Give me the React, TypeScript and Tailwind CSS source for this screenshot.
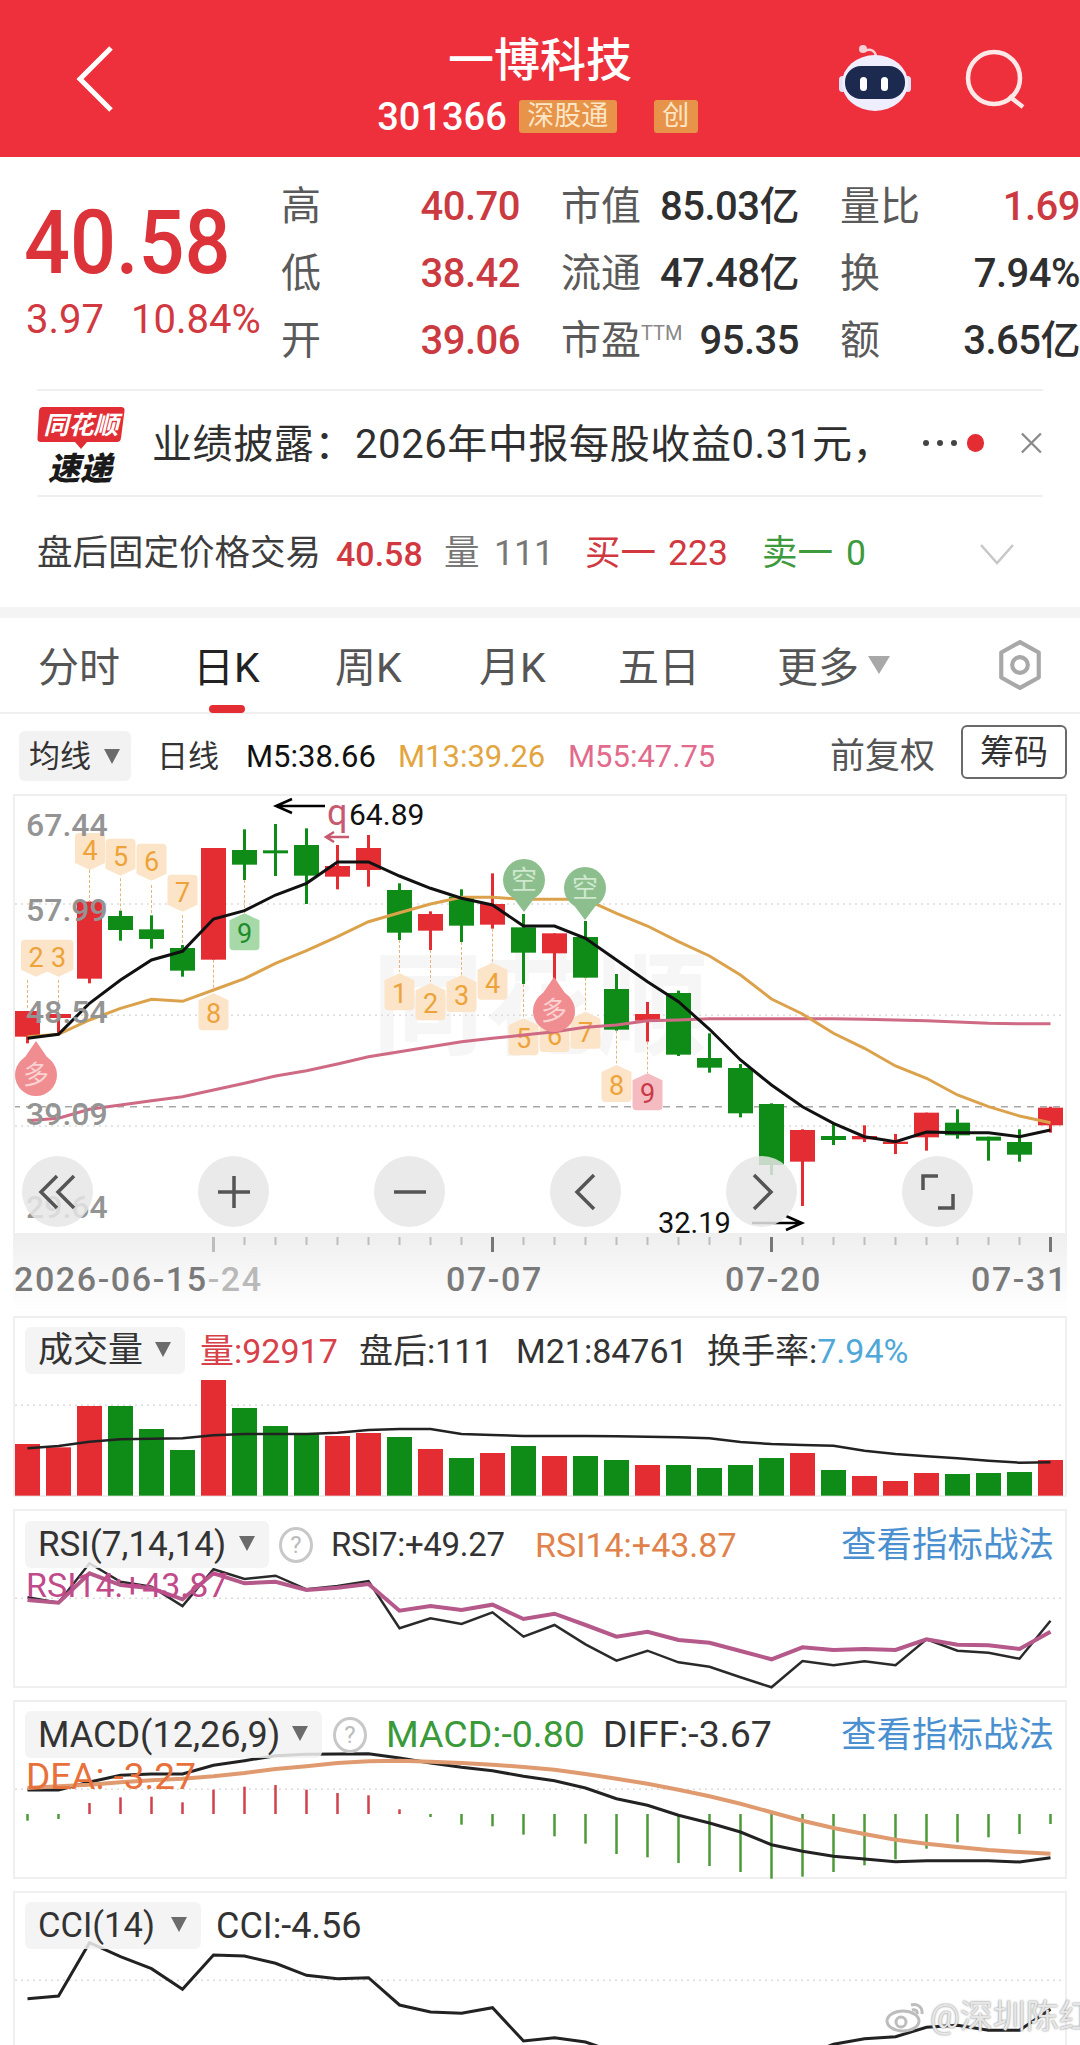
import type { ReactNode } from 'react'

const RED = '#e42c33'
const GREEN = '#0f8c18'
const GRID = '#dcdcdc'

// x of the nth candle; every chart on the page shares it
const cx = (i: number) => 27.5 + 31 * i
const pts = (vals: number[], off: number) =>
  vals.map((v, i) => `${cx(i)},${(v / 3 + off).toFixed(1)}`).join(' ')

const isRed = [1, 1, 1, 0, 0, 0, 1, 0, 0, 0, 1, 1, 0, 1, 0, 1, 0, 1, 0, 0, 1, 0, 0, 0, 0, 1, 0, 1, 1, 1, 0, 0, 0, 1]

// body top, body bottom, wick top, wick bottom
const candles = [
  [663, 740, 663, 760], [672, 684, 672, 730], [335, 566, 335, 580], [378, 420, 362, 452], [418, 447, 376, 476],
  [474, 542, 465, 560], [174, 509, 174, 509], [180, 224, 118, 270], [181, 190, 102, 258], [165, 257, 115, 342],
  [228, 260, 165, 298], [174, 240, 135, 290], [300, 428, 280, 450], [372, 422, 364, 480], [320, 407, 298, 456],
  [342, 404, 250, 416], [412, 488, 372, 582], [430, 490, 430, 570], [441, 563, 393, 563], [597, 719, 552, 722],
  [672, 692, 636, 755], [609, 794, 602, 798], [804, 833, 730, 848], [834, 970, 822, 982], [942, 1125, 940, 1155],
  [1020, 1115, 1018, 1248], [1038, 1050, 1000, 1065], [1038, 1048, 1006, 1056], [1055, 1062, 1032, 1092],
  [968, 1042, 968, 1082], [998, 1036, 958, 1046], [1040, 1052, 1040, 1112], [1056, 1094, 1018, 1115], [953, 1006, 950, 1028],
]

const ma5 = [745, 733, 640, 570, 510, 484, 387, 362, 315, 280, 216, 216, 258, 295, 325, 345, 408, 408, 445, 510, 575, 635, 718, 810, 885, 950, 1000, 1040, 1055, 1026, 1028, 1028, 1040, 1020]
const ma13 = [740, 733, 690, 655, 628, 634, 600, 566, 520, 482, 440, 395, 368, 342, 322, 322, 328, 328, 328, 370, 408, 455, 498, 555, 627, 672, 730, 775, 828, 865, 915, 950, 978, 998]
const ma55 = [992, 985, 958, 945, 932, 920, 900, 880, 858, 842, 822, 800, 785, 770, 755, 745, 735, 725, 712, 705, 692, 690, 686, 686, 686, 686, 686, 688, 690, 692, 696, 700, 701, 701]

const markers = [
  { t: '2', i: 0, x: 36, v: 500, up: false, from: 570, to: 660 },
  { t: '3', i: 1, v: 500, up: false, from: 570, to: 672 },
  { t: '4', i: 2, x: 90, v: 180, up: false, from: 240, to: 335 },
  { t: '5', i: 3, v: 197, up: false, from: 265, to: 362 },
  { t: '6', i: 4, v: 212, up: false, from: 285, to: 376 },
  { t: '7', i: 5, v: 305, up: false, from: 375, to: 465 },
  { t: '8', i: 6, v: 670, up: true, from: 509, to: 600 },
  { t: '9', i: 7, v: 430, up: true, from: 270, to: 380, tone: 'green' },
  { t: '1', i: 12, v: 610, up: true, from: 450, to: 545 },
  { t: '2', i: 13, v: 640, up: true, from: 480, to: 575 },
  { t: '3', i: 14, v: 615, up: true, from: 456, to: 555 },
  { t: '4', i: 15, v: 578, up: true, from: 416, to: 515 },
  { t: '5', i: 16, v: 745, up: true, from: 582, to: 680 },
  { t: '6', i: 17, v: 735, up: true, from: 570, to: 680 },
  { t: '7', i: 18, v: 725, up: true, from: 563, to: 660 },
  { t: '8', i: 19, v: 885, up: true, from: 722, to: 820 },
  { t: '9', i: 20, v: 910, up: true, from: 755, to: 850, tone: 'red' },
]

const volTops = [402, 412, 288, 288, 357, 420, 210, 294, 348, 372, 378, 369, 381, 417, 444, 429, 408, 438, 438, 450, 465, 465, 474, 465, 444, 429, 480, 498, 513, 489, 492, 489, 486, 450]
const volLine = [415, 408, 395, 388, 386, 385, 376, 372, 372, 372, 368, 360, 357, 357, 372, 375, 378, 378, 378, 379, 380, 382, 385, 396, 402, 405, 407, 422, 432, 439, 445, 452, 458, 457]

const rsi7 = [862, 878, 760, 815, 830, 888, 778, 807, 797, 838, 828, 813, 955, 925, 942, 907, 980, 945, 1003, 1052, 1022, 1057, 1070, 1102, 1132, 1053, 1066, 1054, 1066, 988, 1022, 1028, 1046, 932]
const rsi14 = [870, 878, 790, 825, 835, 868, 790, 820, 815, 840, 833, 822, 902, 888, 900, 884, 927, 911, 945, 980, 965, 990, 998, 1023, 1048, 1012, 1020, 1017, 1020, 988, 1004, 1006, 1017, 965]

const diff = [306, 306, 282, 262, 258, 258, 232, 218, 203, 199, 198, 197, 210, 225, 238, 248, 265, 278, 300, 332, 352, 382, 405, 432, 470, 490, 505, 513, 521, 518, 518, 518, 522, 509]
const dea = [300, 295, 290, 283, 277, 272, 265, 255, 243, 235, 225, 220, 218, 221, 225, 230, 237, 245, 258, 272, 287, 305, 325, 347, 373, 398, 420, 438, 455, 467, 477, 486, 492, 497]
const macd = [398, 393, 345, 328, 326, 343, 305, 296, 291, 305, 315, 322, 364, 387, 410, 415, 440, 445, 467, 498, 508, 525, 534, 552, 572, 566, 552, 532, 514, 482, 463, 448, 438, 408]

const cci = [938, 930, 770, 812, 848, 910, 807, 810, 832, 868, 878, 875, 957, 978, 982, 965, 1065, 1055, 1068, 1100, 1130, 1150, 1180, 1190, 1160, 1110, 1075, 1058, 1052, 1024, 1018, 1033, 1033, 970]

function Caret({ className = '' }: { className?: string }) {
  return (
    <svg width="18" height="18" viewBox="0 0 18 18" className={className}>
      <path d="M1 2H17L9 17Z" fill="#6b6b6b" />
    </svg>
  )
}

function Pill({ label, width, size = 'text-[35px]' }: { label: string; width: number; size?: string }) {
  return (
    <div
      className={`flex h-[47px] shrink-0 items-center justify-between rounded-md bg-[#f2f2f2]/85 pl-[13px] pr-[13px] text-[#333] ${size}`}
      style={{ width }}
    >
      <span className="whitespace-nowrap">{label}</span>
      <Caret className="mb-1" />
    </div>
  )
}

function Help() {
  return (
    <span className="flex h-[36px] w-[34px] shrink-0 items-center justify-center rounded-[50%] border-[3px] border-[#c8c8c8] text-[24px] text-[#bbb]">
      ?
    </span>
  )
}

function Marker({ m }: { m: (typeof markers)[number] }) {
  const x = m.x ?? cx(m.i)
  const y = m.v / 3 - 6
  const fill = m.tone === 'green' ? '#a6d8a8' : m.tone === 'red' ? '#f4bcc0' : '#fce4c8'
  const ink = m.tone === 'green' ? '#1e8c2a' : m.tone === 'red' ? '#c93a48' : '#eda33a'
  const d = m.up
    ? `M${x} ${y - 20}L${x + 15} ${y - 13}V${y + 13}Q${x + 15} ${y + 17} ${x + 11} ${y + 17}H${x - 11}Q${x - 15} ${y + 17} ${x - 15} ${y + 13}V${y - 13}Z`
    : `M${x} ${y + 20}L${x + 15} ${y + 13}V${y - 13}Q${x + 15} ${y - 17} ${x + 11} ${y - 17}H${x - 11}Q${x - 15} ${y - 17} ${x - 15} ${y - 13}V${y + 13}Z`
  return (
    <g>
      <line
        x1={cx(m.i)}
        x2={cx(m.i)}
        y1={m.from / 3 - 6}
        y2={m.to / 3 - 6}
        stroke="#e6b47c"
        strokeWidth="1"
        strokeDasharray="3 2"
      />
      <path d={d} fill={fill} />
      <text x={x} y={y + 1} textAnchor="middle" dominantBaseline="central" fontSize="27" fill={ink}>
        {m.t}
      </text>
    </g>
  )
}

function Bubble({ t, x, y, up }: { t: string; x: number; y: number; up: boolean }) {
  const fill = up ? '#f08d90' : '#8dbf8e'
  const ink = up ? '#fbd2d2' : '#cfe8cf'
  const tip = up ? y - 34 : y + 32
  const edge = up ? y - 12 : y + 12
  return (
    <g>
      <circle cx={x} cy={y} r="21" fill={fill} />
      <path d={`M${x - 15} ${edge}L${x} ${tip}L${x + 15} ${edge}Z`} fill={fill} />
      <text x={x} y={y} textAnchor="middle" dominantBaseline="central" fontSize="26" fill={ink}>
        {t}
      </text>
    </g>
  )
}

function RoundButton({ children }: { children: ReactNode }) {
  return (
    <div className="flex h-[71px] w-[71px] shrink-0 items-center justify-center rounded-full bg-[#e6e6e6]/85">
      <svg width="46" height="46" viewBox="0 0 46 46" fill="none" stroke="#555" strokeWidth="3.5">
        {children}
      </svg>
    </div>
  )
}

function Panel({ height, children }: { height: number; children: ReactNode }) {
  return (
    <div className="relative mx-[13px] shrink-0 border-2 border-[#efefef]" style={{ height }}>
      {children}
    </div>
  )
}

function PanelSvg({ off, children }: { off: number; children: ReactNode }) {
  return (
    <svg width="1080" height="300" className="absolute left-[-15px] top-0 overflow-visible" fill="none">
      <g transform={`translate(0 ${off})`}>{children}</g>
    </svg>
  )
}

function QuoteCell({ label, value, tone }: { label: string; value: string; tone: string }) {
  return (
    <div className="flex items-center justify-between">
      <span className="text-[40px] text-[#5a5a5a]">{label}</span>
      <span className={`whitespace-nowrap font-medium tracking-[-0.5px] ${tone}`}>{value}</span>
    </div>
  )
}

export default function App() {
  return (
    <div className="relative h-[2045px] w-[1080px] overflow-hidden bg-white font-[family-name:Roboto,'Noto_Sans_CJK_SC',sans-serif] text-[#333]">
      {/* title bar */}
      <header className="grid h-[157px] grid-cols-[277px_1fr_277px] items-center bg-[#ee2f3c] text-white">
        <div className="pl-[75px]">
          <svg width="40" height="66" viewBox="0 0 40 66" fill="none" stroke="#fff" strokeWidth="5">
            <path d="M36 2L5 33L36 64" />
          </svg>
        </div>
        <div className="flex flex-col items-center pt-[8px]">
          <div className="text-[46px] font-medium leading-[56px]">一博科技</div>
          <div className="mt-[12px] flex items-center pr-[5px]">
            <span className="text-[38px] font-medium leading-[34px]">301366</span>
            <span className="ml-[12px] flex h-[33px] w-[98px] items-center justify-center rounded-[3px] bg-[#e8934a] text-[27px] text-[#fbe6c6]">
              深股通
            </span>
            <span className="ml-[37px] flex h-[33px] w-[44px] items-center justify-center rounded-[3px] bg-[#e8934a] text-[27px] text-[#fbe6c6]">
              创
            </span>
          </div>
        </div>
        <div className="flex items-center justify-end gap-[53px] pr-[55px]">
          <svg width="74" height="68" viewBox="0 0 74 68">
            <path d="M27 6C33 3 37 6 38 11" fill="none" stroke="#f8cfd6" strokeWidth="2.5" />
            <circle cx="25" cy="4" r="4" fill="#f8cfd6" />
            <rect x="1" y="31" width="7" height="16" rx="3.5" fill="#e3e0f8" />
            <rect x="66" y="31" width="7" height="16" rx="3.5" fill="#e3e0f8" />
            <ellipse cx="37" cy="38" rx="33" ry="28" fill="#efeeff" />
            <rect x="7" y="21" width="60" height="33" rx="16" fill="#1d2a50" />
            <rect x="22" y="32" width="7" height="14" rx="3.5" fill="#fff" />
            <rect x="43" y="32" width="7" height="14" rx="3.5" fill="#fff" />
          </svg>
          <svg width="60" height="60" viewBox="0 0 60 60" fill="none" stroke="#fde8e8" strokeWidth="4.5">
            <circle cx="29" cy="29" r="26" />
            <path d="M44 47L58 58" />
          </svg>
        </div>
      </header>

      {/* quote */}
      <section className="flex h-[232px] pl-[24px]">
        <div className="w-[257px] shrink-0 pt-[52px]">
          <div className="origin-top scale-y-[1.1] text-[81px] font-medium leading-[62px] text-[#dc3239]">40.58</div>
          <div className="mt-[31px] flex pl-[2px] text-[40px] leading-[36px] text-[#d2383f]">
            <span className="w-[105px]">3.97</span>
            <span className="whitespace-nowrap">10.84%</span>
          </div>
        </div>
        <div className="grid h-[217px] w-[800px] shrink-0 grid-cols-[239px_238px_240px] grid-rows-3 gap-x-[41px] pt-[17px] text-[40px] leading-none">
          <QuoteCell label="高" value="40.70" tone="text-[#cb3a41]" />
          <QuoteCell label="市值" value="85.03亿" tone="text-[#2f2f2f]" />
          <QuoteCell label="量比" value="1.69" tone="text-[#cb3a41]" />
          <QuoteCell label="低" value="38.42" tone="text-[#cb3a41]" />
          <QuoteCell label="流通" value="47.48亿" tone="text-[#2f2f2f]" />
          <QuoteCell label="换" value="7.94%" tone="text-[#2f2f2f]" />
          <QuoteCell label="开" value="39.06" tone="text-[#cb3a41]" />
          <div className="flex items-center justify-between">
            <span className="flex items-start text-[40px] text-[#5a5a5a]">
              市盈<span className="mt-[2px] text-[20px] text-[#888]">TTM</span>
            </span>
            <span className="font-medium tracking-[-0.5px] text-[#2f2f2f]">95.35</span>
          </div>
          <QuoteCell label="额" value="3.65亿" tone="text-[#2f2f2f]" />
        </div>
      </section>

      {/* news strip */}
      <section className="mx-[37px] flex h-[108px] items-center border-y-2 border-[#efefef]">
        <svg width="88" height="76" viewBox="0 0 88 76" className="mt-[3px] shrink-0">
          <path d="M6 0H84Q88 0 87.5 4L84 31Q83.5 35 80 35H50L44 42L38 35H4Q0 35 .5 31L2 4Q2.5 0 6 0Z" fill="#e12e35" />
          <text x="44" y="27" textAnchor="middle" fontSize="25" fontWeight="700" fontStyle="italic" fill="#fff">
            同花顺
          </text>
          <text x="43" y="73" textAnchor="middle" fontSize="32" fontWeight="900" fontStyle="italic" fill="#1a1a1a">
            速递
          </text>
        </svg>
        <span className="ml-[27px] mt-[3px] whitespace-nowrap text-[40px] leading-none tracking-[0.6px] text-[#2f2f2f]">
          业绩披露：2026年中报每股收益0.31元，
        </span>
        <span className="ml-[30px] flex gap-[8px]">
          <i className="h-[6px] w-[6px] rounded-full bg-[#444]" />
          <i className="h-[6px] w-[6px] rounded-full bg-[#444]" />
          <i className="h-[6px] w-[6px] rounded-full bg-[#444]" />
        </span>
        <span className="ml-[10px] h-[18px] w-[18px] rounded-full bg-[#e42c33]" />
        <svg width="24" height="24" viewBox="0 0 24 24" className="ml-[36px]" stroke="#8a8a8a" strokeWidth="2.5">
          <path d="M2 2L22 22M22 2L2 22" />
        </svg>
      </section>

      {/* after-hours row */}
      <section className="flex h-[110px] items-center pl-[37px] pt-[3px] text-[35.5px] leading-none">
        <span className="w-[299px] whitespace-nowrap text-[#3d3d3d]">盘后固定价格交易</span>
        <span className="w-[108px] text-[34px] font-medium text-[#d2383f]">40.58</span>
        <span className="w-[50px] text-[#777]">量</span>
        <span className="w-[91px] text-[#777]">111</span>
        <span className="w-[83px] whitespace-nowrap text-[#d2383f]">买一</span>
        <span className="w-[94px] text-[#d2383f]">223</span>
        <span className="w-[84px] whitespace-nowrap text-[#3d9a3d]">卖一</span>
        <span className="w-[133px] text-[#3d9a3d]">0</span>
        <svg width="36" height="22" viewBox="0 0 36 22" fill="none" stroke="#c8c8c8" strokeWidth="2.5">
          <path d="M2 2L18 20L34 2" />
        </svg>
      </section>
      <div className="h-[11px] bg-[#f4f4f4]" />

      {/* period tabs */}
      <nav className="relative flex h-[96px] items-center border-b-2 border-[#efefef] pl-[38px] pt-[6px] text-[41px] leading-none text-[#555]">
        <span className="w-[155px]">分时</span>
        <span className="relative w-[142px] text-[#222]">
          日K
          <i className="absolute left-[16px] top-[57px] h-[8px] w-[36px] rounded-full bg-[#e42c33]" />
        </span>
        <span className="w-[144px]">周K</span>
        <span className="w-[139px]">月K</span>
        <span className="w-[159px]">五日</span>
        <span>更多</span>
        <svg width="22" height="18" viewBox="0 0 22 18" className="mb-[6px] ml-[9px]">
          <path d="M0 0H22L11 18Z" fill="#a8a8a8" />
        </svg>
        <svg width="50" height="50" viewBox="0 0 48 48" fill="none" stroke="#a8a8a8" strokeWidth="4" className="mb-[6px] ml-[105px]">
          <path d="M24 2L42 12V36L24 46L6 36V12Z" strokeLinejoin="round" />
          <circle cx="24" cy="24" r="7.5" />
        </svg>
      </nav>

      {/* indicator bar */}
      <section className="flex h-[76px] items-center pl-[19px] pt-[8px] text-[31px] leading-none">
        <div className="flex h-[50px] w-[112px] items-center justify-between rounded-md bg-[#f2f2f2] pl-[10px] pr-[10px]">
          <span>均线</span>
          <Caret />
        </div>
        <span className="ml-[26px] w-[89px]">日线</span>
        <span className="w-[152px] text-[#111]">M5:38.66</span>
        <span className="w-[170px] text-[#e3a53f]">M13:39.26</span>
        <span className="w-[262px] text-[#e26a8c]">M55:47.75</span>
        <span className="w-[131px] whitespace-nowrap text-[35px] text-[#555]">前复权</span>
        <span className="mb-[8px] flex h-[54px] w-[106px] items-center justify-center rounded-md border-2 border-[#6a6a6a] text-[34px]">
          筹码
        </span>
      </section>

      {/* k-line chart */}
      <div className="relative mx-[13px] mt-[4px] h-[441px] overflow-hidden border-2 border-[#efefef]">
        <svg width="1080" height="441" className="absolute left-[-15px] top-0" fill="none">
          <text x="540" y="250" textAnchor="middle" fontSize="112" fontWeight="700" fill="#f6f6f6">
            同花顺
          </text>
          {[342, 676, 1008].map((v) => (
            <line key={v} x1="15" x2="1065" y1={v / 3 - 6} y2={v / 3 - 6} stroke={GRID} strokeWidth="1.5" strokeDasharray="2 4" />
          ))}
          <line x1="13" x2="1065" y1={950 / 3 - 6} y2={950 / 3 - 6} stroke="#a8a8a8" strokeWidth="1.5" strokeDasharray="7 6" />
          {candles.map((c, i) => {
            const color = isRed[i] ? RED : GREEN
            return (
              <g key={i} fill={color}>
                <rect x={cx(i) - 1.5} y={c[2] / 3 - 6} width="3" height={(c[3] - c[2]) / 3} />
                <rect x={cx(i) - 12.5} y={c[0] / 3 - 6} width="25" height={(c[1] - c[0]) / 3} />
              </g>
            )
          })}
          {markers.map((m, i) => (
            <Marker key={i} m={m} />
          ))}
          <polyline points={pts(ma55, -6)} stroke="#cf6a85" strokeWidth="3" />
          <polyline points={pts(ma13, -6)} stroke="#dca24b" strokeWidth="3" />
          <polyline points={pts(ma5, -6)} stroke="#111" strokeWidth="3" />
          <Bubble t="多" x={36} y={279} up />
          <Bubble t="多" x={554} y={215} up />
          <Bubble t="空" x={524} y={84} up={false} />
          <Bubble t="空" x={585} y={92} up={false} />
          {[
            ['67.44', 29],
            ['57.99', 114],
            ['48.54', 216],
            ['39.09', 318],
            ['29.64', 411],
          ].map(([t, y]) => (
            <text key={t} x="26" y={y} dominantBaseline="central" fontSize="32" fontWeight="500" fill="#949494">
              {t}
            </text>
          ))}
          <path d="M325 10H276M292 3L276 10L292 17" stroke="#000" strokeWidth="2.5" />
          <text x="327" y="29" fontSize="36" fill="#c75a70">
            q
          </text>
          <path d="M349 41H326M334 36L326 41L334 46" stroke="#c75a70" strokeWidth="2.5" />
          <text x="349" y="18" dominantBaseline="central" fontSize="30" fill="#111">
            64.89
          </text>
          <text x="658" y="427" dominantBaseline="central" fontSize="29" fill="#111">
            32.19
          </text>
          <path d="M752 427H802M786 420L802 427L786 434" stroke="#000" strokeWidth="2.5" />
        </svg>
        <div className="absolute left-[7px] top-[360px] flex gap-[105px]">
          <RoundButton>
            <path d="M22 7L6 23L22 39M39 7L23 23L39 39" />
          </RoundButton>
          <RoundButton>
            <path d="M7 23H39M23 7V39" />
          </RoundButton>
          <RoundButton>
            <path d="M7 23H39" />
          </RoundButton>
          <RoundButton>
            <path d="M31 6L14 23L31 40" />
          </RoundButton>
          <RoundButton>
            <path d="M15 6L32 23L15 40" />
          </RoundButton>
          <RoundButton>
            <path d="M8 21V7H23M38 25V39H23" />
          </RoundButton>
        </div>
      </div>

      {/* date axis */}
      <div className="mx-[13px] h-[75px] bg-linear-to-b from-[#efefef] to-white">
        <svg width="1054" height="18" className="block" stroke="#bdbdbd" strokeWidth="2">
          {Array.from({ length: 28 }, (_, k) => {
            const i = k + 6
            const major = i === 6 || i === 15 || i === 24 || i === 33
            return (
              <line
                key={i}
                x1={cx(i) - 13}
                x2={cx(i) - 13}
                y1="2"
                y2={major ? 17 : 10}
                stroke={major && i !== 6 ? '#777' : '#bdbdbd'}
                strokeWidth={major ? 3 : 2}
              />
            )
          })}
        </svg>
        <div className="mt-[9px] flex whitespace-nowrap pl-[1px] text-[34px] font-medium leading-none tracking-[1.6px] text-[#7a7a7a]">
          <span className="w-[432px] shrink-0">
            2026-06-15<span className="text-[#b9b9b9]">-24</span>
          </span>
          <span className="w-[279px] shrink-0">07-07</span>
          <span className="w-[246px] shrink-0">07-20</span>
          <span className="shrink-0">07-31</span>
        </div>
      </div>

      {/* volume */}
      <div className="mt-[6px]">
        <Panel height={181}>
          <PanelSvg off={-8}>
            <line x1="15" x2="1065" y1={286 / 3} y2={286 / 3} stroke={GRID} strokeWidth="1.5" strokeDasharray="2 4" />
            {volTops.map((v, i) => (
              <rect
                key={i}
                x={cx(i) - 12.5}
                y={v / 3}
                width="25"
                height={(557 - v) / 3}
                fill={isRed[i] ? RED : GREEN}
              />
            ))}
            <polyline points={pts(volLine, 0)} stroke="#222" strokeWidth="2.5" />
          </PanelSvg>
          <div className="relative flex items-center pl-[10px] pt-[9px] text-[34px] leading-none">
            <Pill label="成交量" width={160} />
            <span className="ml-[15px] w-[159px] text-[#d8404a]">量:92917</span>
            <span className="w-[157px] whitespace-nowrap">盘后:111</span>
            <span className="w-[191px]">M21:84761</span>
            <span className="whitespace-nowrap">
              换手率:<span className="text-[#4fa8d8]">7.94%</span>
            </span>
          </div>
        </Panel>
      </div>

      {/* RSI */}
      <div className="mt-[12px]">
        <Panel height={179}>
          <PanelSvg off={-201}>
            <line x1="15" x2="1065" y1={865 / 3} y2={865 / 3} stroke={GRID} strokeWidth="1.5" strokeDasharray="2 4" />
            <polyline points={pts(rsi7, 0)} stroke="#2a2a2a" strokeWidth="2.5" />
            <polyline points={pts(rsi14, 0)} stroke="#b5588a" strokeWidth="4" />
          </PanelSvg>
          <div className="relative flex items-center pl-[10px] pr-[11px] pt-[10px] text-[33px] leading-none">
            <Pill label="RSI(7,14,14)" width={244} />
            <span className="ml-[10px]">
              <Help />
            </span>
            <span className="ml-[18px] w-[204px] tracking-[-0.3px]">RSI7:+49.27</span>
            <span className="text-[34px] text-[#e0824a]">RSI14:+43.87</span>
            <span className="ml-auto mt-[2px] whitespace-nowrap text-[35.5px] text-[#4a90d0]">查看指标战法</span>
          </div>
          <div className="relative ml-[11px] text-[34px] leading-none text-[#c04a8a]">RSI14:+43.87</div>
        </Panel>
      </div>

      {/* MACD */}
      <div className="mt-[12px]">
        <Panel height={179}>
          <PanelSvg off={-14}>
            <line x1="15" x2="1065" y1={304 / 3} y2={304 / 3} stroke={GRID} strokeWidth="1.5" strokeDasharray="2 4" />
            {macd.map((v, i) => (
              <line
                key={i}
                x1={cx(i)}
                x2={cx(i)}
                y1={378 / 3}
                y2={v / 3}
                stroke={v < 378 ? '#d0414c' : '#4c9a38'}
                strokeWidth="2.5"
              />
            ))}
            <polyline points={pts(diff, 0)} stroke="#222" strokeWidth="3" />
            <polyline points={pts(dea, 0)} stroke="#e09a70" strokeWidth="4" />
          </PanelSvg>
          <div className="relative flex items-center pl-[10px] pr-[11px] pt-[9px] text-[37.5px] leading-none">
            <Pill label="MACD(12,26,9)" width={297} size="text-[36px]" />
            <span className="ml-[11px]">
              <Help />
            </span>
            <span className="ml-[19px] w-[217px] text-[#3a9a3a]">MACD:-0.80</span>
            <span>DIFF:-3.67</span>
            <span className="ml-auto mt-[2px] whitespace-nowrap text-[35.5px] text-[#4a90d0]">查看指标战法</span>
          </div>
          <div className="relative ml-[11px] text-[37px] leading-none text-[#e8703a]">DEA: -3.27</div>
        </Panel>
      </div>

      {/* CCI */}
      <div className="mt-[12px]">
        <Panel height={200}>
          <PanelSvg off={-207}>
            <line x1="15" x2="1065" y1={883 / 3} y2={883 / 3} stroke={GRID} strokeWidth="1.5" strokeDasharray="2 4" />
            <polyline points={pts(cci, 0)} stroke="#222" strokeWidth="3" />
          </PanelSvg>
          <div className="relative flex items-center pl-[10px] pt-[9px] text-[36px] leading-none">
            <Pill label="CCI(14)" width={176} size="text-[34.5px]" />
            <span className="ml-[15px]">CCI:-4.56</span>
          </div>
        </Panel>
      </div>

      {/* weibo watermark */}
      <div className="absolute bottom-[12px] left-[885px] flex w-[220px] items-center text-[33px] leading-none text-[#e6e6e6] [text-shadow:0_0_2px_#777]">
        <svg width="42" height="34" viewBox="0 0 42 34" fill="none" stroke="#bdbdbd" strokeWidth="3" className="shrink-0">
          <ellipse cx="18" cy="22" rx="16" ry="10" />
          <circle cx="16" cy="23" r="5" />
          <path d="M26 6C32 4 38 8 37 15M27 11C30 10 33 12 32 15" />
        </svg>
        <span className="ml-[3px] whitespace-nowrap">@深圳陈红</span>
      </div>
    </div>
  )
}
